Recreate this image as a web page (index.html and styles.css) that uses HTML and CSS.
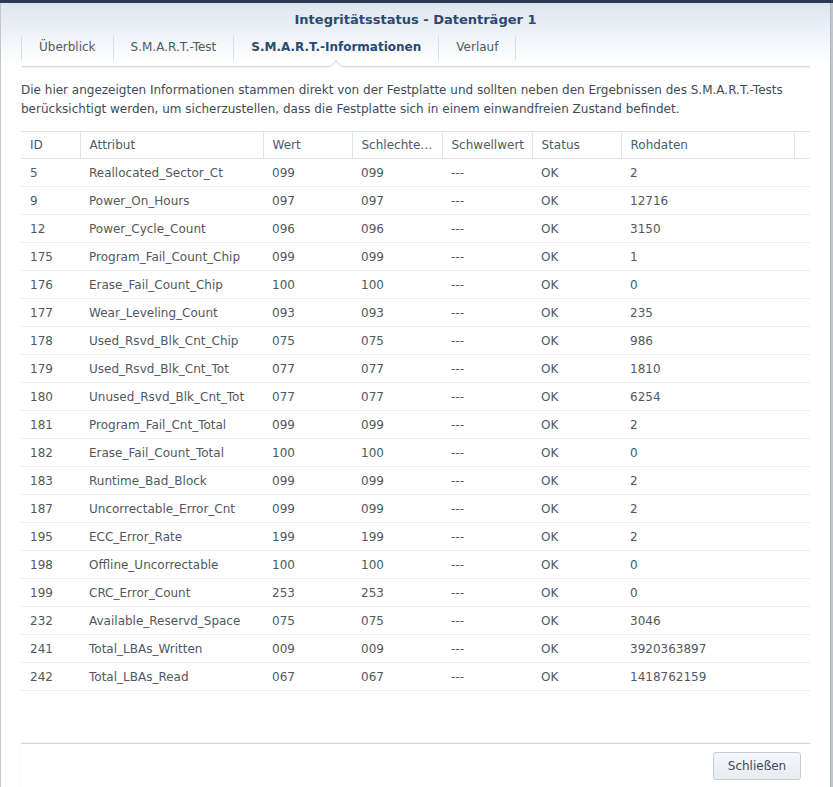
FILE: index.html
```html
<!DOCTYPE html>
<html lang="de">
<head>
<meta charset="utf-8">
<title>Integritätsstatus - Datenträger 1</title>
<link rel="stylesheet" href="styles.css">
</head>
<body>
<div class="dialog">
  <div class="titlebar">Integritätsstatus - Datenträger 1</div>
  <div class="tabs">
    <div class="tab">Überblick</div>
    <div class="tab">S.M.A.R.T.-Test</div>
    <div class="tab active">S.M.A.R.T.-Informationen</div>
    <div class="tab">Verlauf</div>
  </div>
  <p class="desc">Die hier angezeigten Informationen stammen direkt von der Festplatte und sollten neben den Ergebnissen des S.M.A.R.T.-Tests berücksichtigt werden, um sicherzustellen, dass die Festplatte sich in einem einwandfreien Zustand befindet.</p>
  <div class="grid">
    <table class="smart">
      <colgroup>
        <col class="c-id"><col class="c-attr"><col class="c-val"><col class="c-worst"><col class="c-thr"><col class="c-stat"><col class="c-raw"><col class="c-pad">
      </colgroup>
      <thead>
        <tr><th>ID</th><th>Attribut</th><th>Wert</th><th>Schlechtester Wert</th><th class="fit">Schwellwert</th><th>Status</th><th>Rohdaten</th><th class="pad"></th></tr>
      </thead>
      <tbody>
        <tr><td>5</td><td>Reallocated_Sector_Ct</td><td>099</td><td>099</td><td>---</td><td>OK</td><td>2</td><td></td></tr>
        <tr><td>9</td><td>Power_On_Hours</td><td>097</td><td>097</td><td>---</td><td>OK</td><td>12716</td><td></td></tr>
        <tr><td>12</td><td>Power_Cycle_Count</td><td>096</td><td>096</td><td>---</td><td>OK</td><td>3150</td><td></td></tr>
        <tr><td>175</td><td>Program_Fail_Count_Chip</td><td>099</td><td>099</td><td>---</td><td>OK</td><td>1</td><td></td></tr>
        <tr><td>176</td><td>Erase_Fail_Count_Chip</td><td>100</td><td>100</td><td>---</td><td>OK</td><td>0</td><td></td></tr>
        <tr><td>177</td><td>Wear_Leveling_Count</td><td>093</td><td>093</td><td>---</td><td>OK</td><td>235</td><td></td></tr>
        <tr><td>178</td><td>Used_Rsvd_Blk_Cnt_Chip</td><td>075</td><td>075</td><td>---</td><td>OK</td><td>986</td><td></td></tr>
        <tr><td>179</td><td>Used_Rsvd_Blk_Cnt_Tot</td><td>077</td><td>077</td><td>---</td><td>OK</td><td>1810</td><td></td></tr>
        <tr><td>180</td><td>Unused_Rsvd_Blk_Cnt_Tot</td><td>077</td><td>077</td><td>---</td><td>OK</td><td>6254</td><td></td></tr>
        <tr><td>181</td><td>Program_Fail_Cnt_Total</td><td>099</td><td>099</td><td>---</td><td>OK</td><td>2</td><td></td></tr>
        <tr><td>182</td><td>Erase_Fail_Count_Total</td><td>100</td><td>100</td><td>---</td><td>OK</td><td>0</td><td></td></tr>
        <tr><td>183</td><td>Runtime_Bad_Block</td><td>099</td><td>099</td><td>---</td><td>OK</td><td>2</td><td></td></tr>
        <tr><td>187</td><td>Uncorrectable_Error_Cnt</td><td>099</td><td>099</td><td>---</td><td>OK</td><td>2</td><td></td></tr>
        <tr><td>195</td><td>ECC_Error_Rate</td><td>199</td><td>199</td><td>---</td><td>OK</td><td>2</td><td></td></tr>
        <tr><td>198</td><td>Offline_Uncorrectable</td><td>100</td><td>100</td><td>---</td><td>OK</td><td>0</td><td></td></tr>
        <tr><td>199</td><td>CRC_Error_Count</td><td>253</td><td>253</td><td>---</td><td>OK</td><td>0</td><td></td></tr>
        <tr><td>232</td><td>Available_Reservd_Space</td><td>075</td><td>075</td><td>---</td><td>OK</td><td>3046</td><td></td></tr>
        <tr><td>241</td><td>Total_LBAs_Written</td><td>009</td><td>009</td><td>---</td><td>OK</td><td>3920363897</td><td></td></tr>
        <tr><td>242</td><td>Total_LBAs_Read</td><td>067</td><td>067</td><td>---</td><td>OK</td><td>1418762159</td><td></td></tr>
      </tbody>
    </table>
  </div>
  <div class="footer">
    <button class="btn" type="button">Schließen</button>
  </div>
</div>
</body>
</html>
```

FILE: styles.css
```css
html, body {
  margin: 0;
  padding: 0;
  height: 100%;
  overflow: hidden;
}
body {
  background: linear-gradient(#2b3a4f 0, #2b3a4f 3px, #c3c7cc 3px);
  font-family: "DejaVu Sans", Verdana, sans-serif;
  font-size: 12px;
  color: #4f5862;
}
.dialog {
  margin: 3px 0 0 1px;
  width: 830px;
  height: 792px;
  box-sizing: border-box;
  border-right: 1px solid #a8b6c5;
  background: linear-gradient(#dde5ef 0, #ffffff 60px, #ffffff);
  display: flex;
  flex-direction: column;
}
.titlebar {
  height: 33px;
  line-height: 34px;
  text-align: center;
  font-weight: bold;
  font-size: 13px;
  color: #2b4a6f;
}
.tabs {
  display: flex;
  margin: 0 20px 0 20px;
  height: 30px;
  border-bottom: 1px solid #d5dbe1;
  box-shadow: 0 1px 0 #eef1f4;
  position: relative;
}
.tab {
  height: 24px;
  line-height: 23px;
  padding: 0 17px 0 17px;
  border-left: 1px solid #d6dee7;
  color: #505a64;
  white-space: nowrap;
  position: relative;
}
.tab:last-child {
  border-right: 1px solid #d6dee7;
}
.tab.active {
  font-weight: bold;
  color: #2b4a6f;
}
.tab.active::after {
  content: "";
  position: absolute;
  left: 50%;
  bottom: -10px;
  width: 7px;
  height: 7px;
  margin-left: -4px;
  background: #ffffff;
  border-left: 1px solid #d5dbe1;
  border-top: 1px solid #d5dbe1;
  transform: rotate(45deg);
}
.desc {
  margin: 14px 20px 0 20px;
  line-height: 19px;
  color: #414b55;
}
.grid {
  flex: 1;
  margin: 12px 20px 0 20px;
  overflow: hidden;
}
.smart {
  width: 789px;
  table-layout: fixed;
  border-collapse: collapse;
}
.c-id { width: 59px; }
.c-attr { width: 183px; }
.c-val { width: 89px; }
.c-worst { width: 90px; }
.c-thr { width: 90px; }
.c-stat { width: 89px; }
.c-raw { width: 173px; }
.c-pad { width: 16px; }
.smart th {
  height: 26px;
  padding: 0 8px 0 9px;
  text-align: left;
  font-weight: normal;
  color: #4a5a6e;
  border-top: 1px solid #dce5ee;
  border-bottom: 1px solid #dce5ee;
  border-right: 1px solid #dce5ee;
  white-space: nowrap;
  overflow: hidden;
  text-overflow: ellipsis;
}
.smart th.fit {
  padding-right: 0;
  text-overflow: clip;
}
.smart th.pad {
  border-right: none;
}
.smart td {
  height: 27px;
  padding: 0 8px 0 9px;
  border-bottom: 1px solid #e8edf2;
  white-space: nowrap;
  overflow: hidden;
  text-overflow: ellipsis;
}
.footer {
  height: 52px;
  box-sizing: border-box;
  flex: none;
  margin: 0 20px;
  border-top: 1px solid #d3d7db;
  box-shadow: 0 -1px 2px rgba(0, 0, 0, 0.06);
  display: flex;
  justify-content: flex-end;
  align-items: flex-start;
  padding-top: 8px;
}
.btn {
  width: 88px;
  height: 28px;
  margin-right: 9px;
  border: 1px solid #c3ceda;
  border-radius: 3px;
  background: linear-gradient(#f6f8fb, #e6ecf2);
  font-family: "DejaVu Sans", Verdana, sans-serif;
  font-size: 12px;
  color: #404a55;
  padding: 0;
}
```
